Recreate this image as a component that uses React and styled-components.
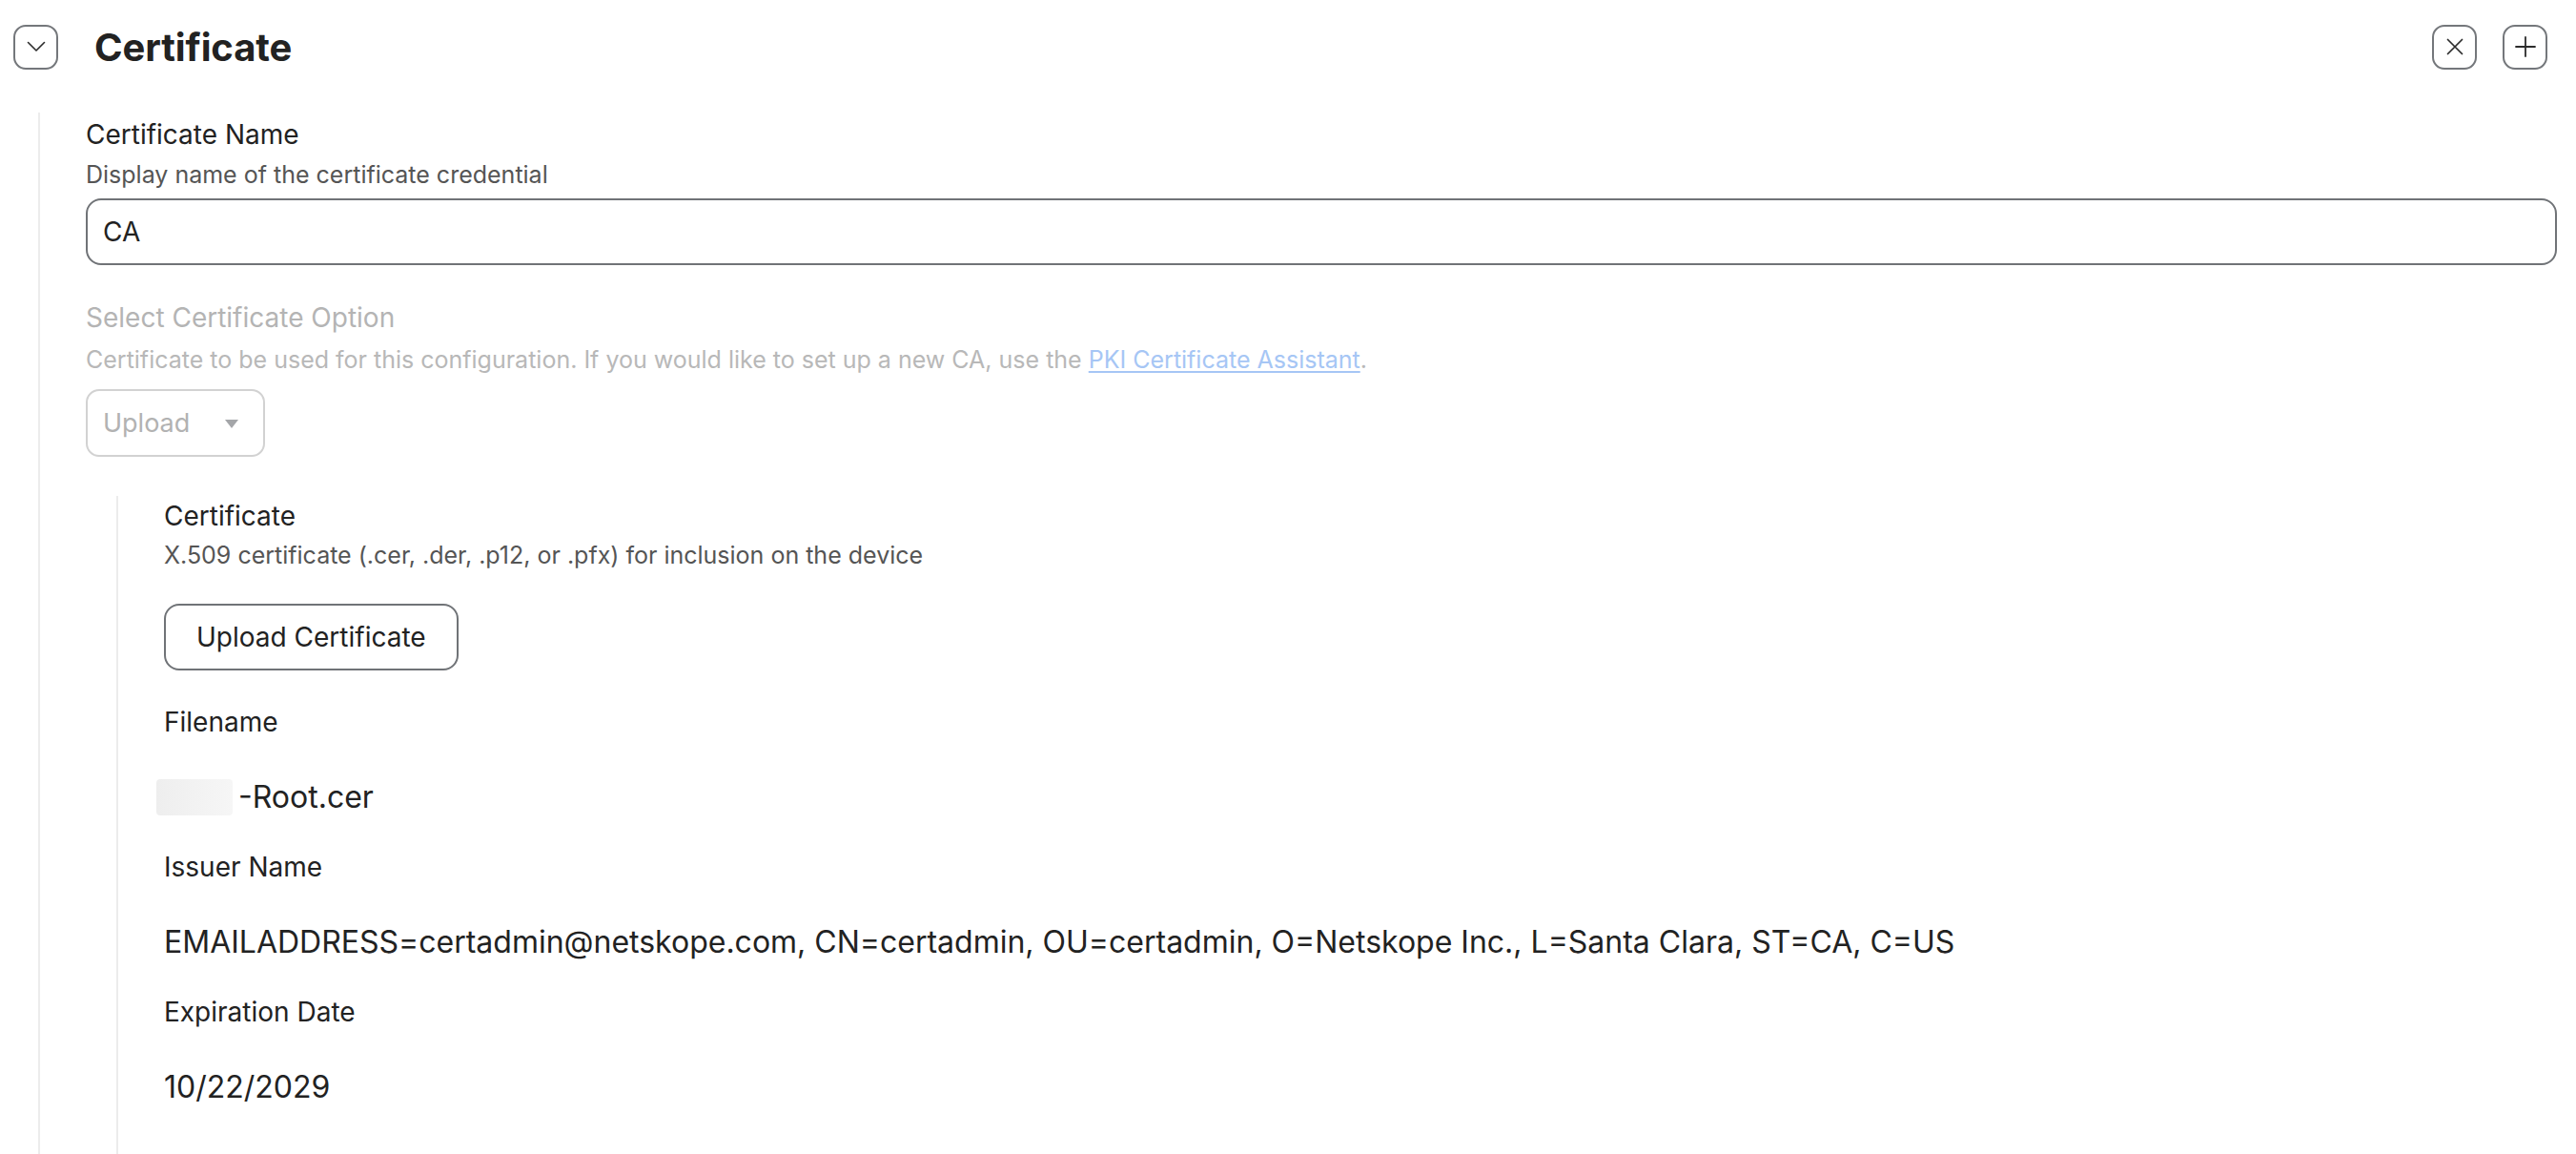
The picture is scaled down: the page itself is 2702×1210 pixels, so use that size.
import React from "react";
import styled, { createGlobalStyle } from "styled-components";

const GlobalStyle = createGlobalStyle`
  html, body { margin: 0; padding: 0; background: #ffffff; }
  body { font-family: Inter, "Noto Sans", "Liberation Sans", sans-serif; color: #222; }
  * { box-sizing: border-box; }
`;

const Page = styled.div`
  padding: 25px 20px 0 14px;
  min-height: 1210px;
  display: flex;
  flex-direction: column;
`;

const Header = styled.div`
  display: flex;
  align-items: center;
  height: 48px;
  padding-right: 10px;
`;

const IconButton = styled.button`
  width: 47px;
  height: 47px;
  border: 2px solid #74777b;
  border-radius: 13px;
  background: #fff;
  display: grid;
  place-items: center;
  padding: 0;
  color: #2b2b2b;
  cursor: pointer;
`;

const Title = styled.h1`
  margin: 0 0 0 38px;
  font-size: 40px;
  font-weight: 700;
  color: #222;
  letter-spacing: -0.1px;
`;

const HeaderActions = styled.div`
  margin-left: auto;
  display: flex;
  gap: 27px;
`;

const Body = styled.div`
  flex: 1;
  margin-top: 45px;
  margin-left: 26px;
  border-left: 2px solid #ececec;
  padding: 7px 0 0 48px;
  display: flex;
  flex-direction: column;
`;

const Label = styled.div`
  font-size: 28px;
  line-height: 32px;
  color: ${(p) => (p.$disabled ? "#b4b4b4" : "#222")};
`;

const Description = styled.div`
  margin-top: ${(p) => p.$gap || 11}px;
  font-size: 25px;
  line-height: 30px;
  color: ${(p) => (p.$disabled ? "#b8b8b8" : "#555")};
`;

const Link = styled.a`
  color: #a6c6f5;
  text-decoration: underline;
  text-underline-offset: 3px;
`;

const TextInput = styled.input`
  margin-top: 10px;
  width: 100%;
  height: 70px;
  border: 2px solid #707377;
  border-radius: 16px;
  padding: 0 16px;
  font-family: inherit;
  font-size: 28px;
  color: #222;
  outline: none;
`;

const Section = styled.div`
  margin-top: ${(p) => p.$gap || 0}px;
  display: flex;
  flex-direction: column;
  align-items: flex-start;
`;

const Select = styled.div`
  margin-top: 16px;
  width: 188px;
  height: 71px;
  border: 2px solid #d2d2d2;
  border-radius: 14px;
  display: flex;
  align-items: center;
  justify-content: space-between;
  padding: 0 26px 0 16px;
  font-size: 27px;
  color: #b2b2b2;
`;

const Caret = styled.span`
  width: 0;
  height: 0;
  border-left: 7px solid transparent;
  border-right: 7px solid transparent;
  border-top: 9px solid #a4a6a9;
  margin-top: 2px;
`;

const Nested = styled.div`
  flex: 1;
  margin-top: 41px;
  margin-left: 32px;
  border-left: 2px solid #ececec;
  padding: 5px 0 60px 48px;
  display: flex;
  flex-direction: column;
  align-items: flex-start;
`;

const OutlineButton = styled.button`
  margin-top: 36px;
  height: 70px;
  padding: 0 32px;
  border: 2px solid #707377;
  border-radius: 16px;
  background: #fff;
  font-family: inherit;
  font-size: 28px;
  color: #222;
  cursor: pointer;
`;

const DataField = styled.div`
  margin-top: ${(p) => p.$gap || 37}px;
  display: flex;
  flex-direction: column;
  align-items: flex-start;
`;

const DataValue = styled.div`
  margin-top: 43px;
  font-size: 32px;
  line-height: 40px;
  color: #222;
  display: flex;
  align-items: center;
`;

const Redacted = styled.span`
  display: inline-block;
  width: 80px;
  height: 38px;
  margin-left: -8px;
  margin-right: 6px;
  border-radius: 4px;
  background: linear-gradient(90deg, #eeeeee, #f6f6f6);
`;

const ChevronIcon = () => (
  <svg width="20" height="12" viewBox="0 0 20 12" fill="none">
    <path d="M1.5 1.5 L10 10 L18.5 1.5" stroke="currentColor" strokeWidth="1.6" strokeLinecap="round" strokeLinejoin="round" />
  </svg>
);

const CloseIcon = () => (
  <svg width="18" height="18" viewBox="0 0 18 18" fill="none">
    <path d="M1.5 1.5 L16.5 16.5 M16.5 1.5 L1.5 16.5" stroke="currentColor" strokeWidth="1.7" strokeLinecap="round" />
  </svg>
);

const PlusIcon = () => (
  <svg width="22" height="22" viewBox="0 0 22 22" fill="none">
    <path d="M11 1 V21 M1 11 H21" stroke="currentColor" strokeWidth="1.8" strokeLinecap="round" />
  </svg>
);

export default function App() {
  return (
    <>
      <GlobalStyle />
      <Page>
        <Header>
          <IconButton aria-label="Collapse"><ChevronIcon /></IconButton>
          <Title>Certificate</Title>
          <HeaderActions>
            <IconButton aria-label="Remove"><CloseIcon /></IconButton>
            <IconButton aria-label="Add"><PlusIcon /></IconButton>
          </HeaderActions>
        </Header>
        <Body>
          <Section>
            <Label>Certificate Name</Label>
            <Description>Display name of the certificate credential</Description>
            <TextInput defaultValue="CA" />
          </Section>
          <Section $gap={39}>
            <Label $disabled>Select Certificate Option</Label>
            <Description $disabled $gap={13}>
              Certificate to be used for this configuration. If you would like to set up a new CA, use the{" "}
              <Link>PKI Certificate Assistant</Link>.
            </Description>
            <Select>
              <span>Upload</span>
              <Caret />
            </Select>
          </Section>
          <Nested>
            <Label>Certificate</Label>
            <Description $gap={10}>X.509 certificate (.cer, .der, .p12, or .pfx) for inclusion on the device</Description>
            <OutlineButton>Upload Certificate</OutlineButton>
            <DataField $gap={38}>
              <Label>Filename</Label>
              <DataValue><Redacted />-Root.cer</DataValue>
            </DataField>
            <DataField>
              <Label>Issuer Name</Label>
              <DataValue>EMAILADDRESS=certadmin@netskope.com, CN=certadmin, OU=certadmin, O=Netskope Inc., L=Santa Clara, ST=CA, C=US</DataValue>
            </DataField>
            <DataField>
              <Label>Expiration Date</Label>
              <DataValue>10/22/2029</DataValue>
            </DataField>
          </Nested>
        </Body>
      </Page>
    </>
  );
}
